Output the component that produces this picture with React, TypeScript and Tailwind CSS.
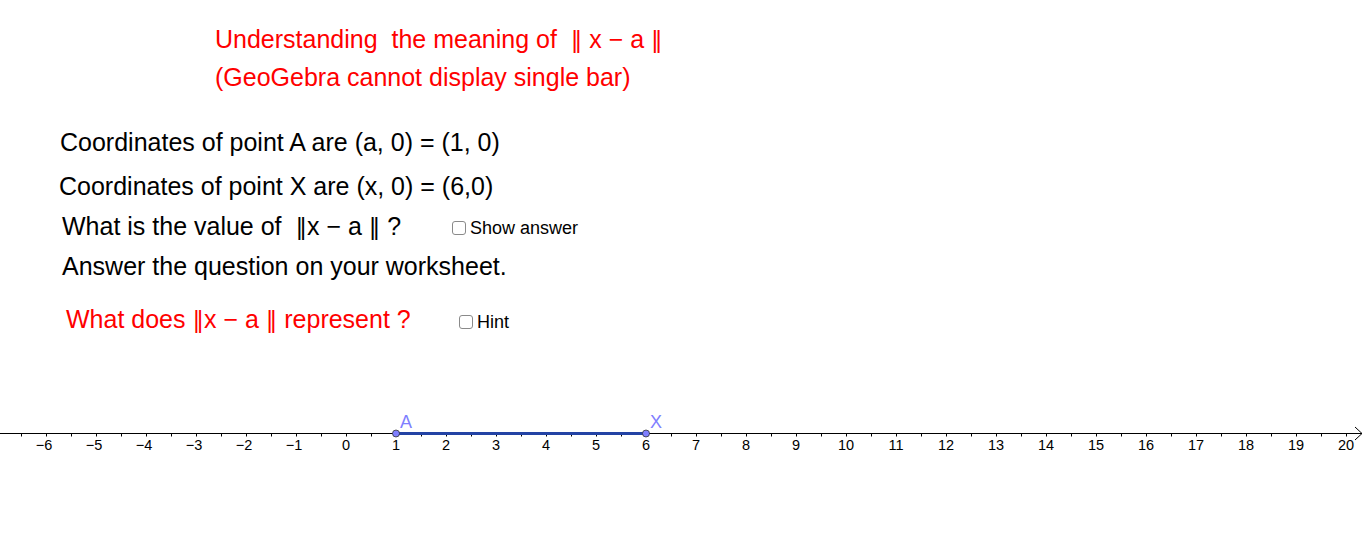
import React from "react";

function Bar() {
  return <span className="font-['DejaVu_Sans',sans-serif] text-[23px]">‖</span>;
}

function Checkbox({ label, className = "" }: { label: string; className?: string }) {
  return (
    <div className={"flex items-center gap-[4px] text-[18px] text-black " + className}>
      <span className="inline-block w-[14px] h-[14px] border border-[#8a8a8a] rounded-[3px] bg-white" />
      <span>{label}</span>
    </div>
  );
}

function NumberLine() {
  const ticks: number[] = [];
  for (let x = -4; x <= 1350; x += 25) ticks.push(x);
  const labels: { x: number; t: string }[] = [];
  for (let n = -6; n <= 20; n++) {
    labels.push({ x: 346 + n * 50, t: n < 0 ? "\u2212" + Math.abs(n) : String(n) });
  }
  return (
    <svg width={1366} height={60} className="block">
      <line x1={0} y1={33.5} x2={1362} y2={33.5} stroke="#000" strokeWidth={1} />
      <polyline points="1355,27 1362,33.5 1355,40" fill="none" stroke="#000" strokeWidth={1} />
      {ticks.map((x) => (
        <line key={x} x1={x + 0.5} y1={33} x2={x + 0.5} y2={36.5} stroke="#000" strokeWidth={1} />
      ))}
      {labels.map((l) => (
        <text
          key={l.t}
          x={l.x + (l.t.startsWith("\u2212") ? -2 : 0)}
          y={49.5}
          fontSize={14.5}
          textAnchor="middle"
          fontFamily="'Liberation Sans', Arial, sans-serif"
          fill="#000"
        >
          {l.t}
        </text>
      ))}
      <line x1={396} y1={33.5} x2={646} y2={33.5} stroke="#2343a4" strokeWidth={3} />
      <circle cx={396} cy={33.5} r={3.5} fill="#7f7fff" stroke="#333" strokeWidth={0.8} />
      <circle cx={646} cy={33.5} r={3.5} fill="#7f7fff" stroke="#333" strokeWidth={0.8} />
      <text x={400} y={28} fontSize={18} fill="#7f7fff" fontFamily="'Liberation Sans', Arial, sans-serif">A</text>
      <text x={650} y={28} fontSize={18} fill="#7f7fff" fontFamily="'Liberation Sans', Arial, sans-serif">X</text>
    </svg>
  );
}

export default function App() {
  return (
    <div className="w-[1366px] h-[558px] bg-white overflow-hidden font-['Liberation_Sans',Arial,sans-serif] text-[25px] text-black whitespace-pre">
      <div className="pt-[21px]">
        <div className="h-[38px] flex items-center pl-[215px] text-[#ff0000]">
          <span>Understanding  the meaning of  <Bar /> x − a <Bar /></span>
        </div>
        <div className="h-[38px] flex items-center pl-[215px] text-[#ff0000]">(GeoGebra cannot display single bar)</div>
        <div className="h-[40px] mt-[26px] flex items-center pl-[60px]">Coordinates of point A are (a, 0) = (1, 0)</div>
        <div className="h-[40px] mt-[4px] flex items-center pl-[59px]">Coordinates of point X are (x, 0) = (6,0)</div>
        <div className="h-[40px] flex items-center pl-[62px]">
          <span className="w-[390px]">What is the value of  <Bar />x − a <Bar /> ?</span>
          <Checkbox label="Show answer" className="mt-[2px]" />
        </div>
        <div className="h-[40px] flex items-center pl-[62px]">Answer the question on your worksheet.</div>
        <div className="h-[40px] mt-[13px] flex items-center pl-[66px]">
          <span className="w-[393px] text-[#ff0000]">What does <Bar />x − a <Bar /> represent ?</span>
          <Checkbox label="Hint" className="mt-[4px]" />
        </div>
        <div className="mt-[60px]">
          <NumberLine />
        </div>
      </div>
    </div>
  );
}
